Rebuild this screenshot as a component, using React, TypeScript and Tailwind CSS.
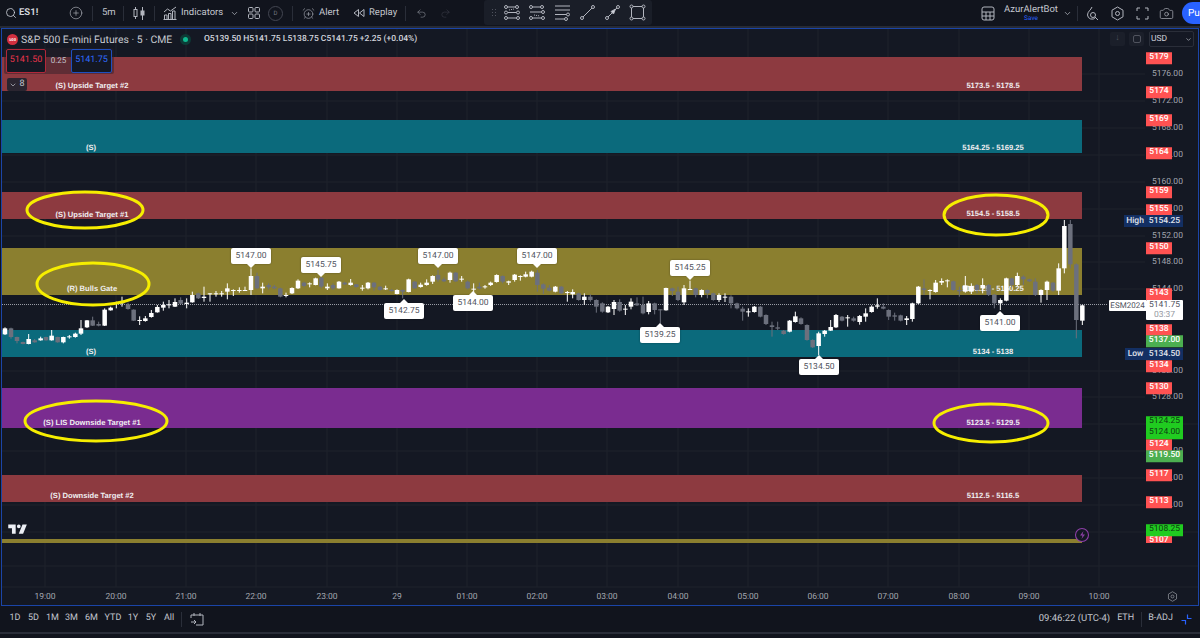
import { AlarmClockPlus, Camera, ChevronDown, CirclePlus, Redo2, Search, Undo2 } from 'lucide-react';

// -----------------------------------------------------------------------------
// Chart data. Everything here is measured in page pixels, the canvas is shifted
// by the frame offset below (frame padding box starts at 2,29).
// -----------------------------------------------------------------------------

const FX = 2;
const FY = 29;

const zones = [
  { y: 57, h: 34, fill: '#8d3a40' },
  { y: 120, h: 33, fill: '#0b6a7c' },
  { y: 192, h: 27, fill: '#8d3a40' },
  { y: 248, h: 47, fill: '#8b7f2f' },
  { y: 330, h: 27, fill: '#0b6a7c' },
  { y: 388, h: 40, fill: '#7a2c90' },
  { y: 475, h: 27, fill: '#8d3a40' },
  { y: 539, h: 4, fill: '#8b7f2f' },
];

const zoneLabels = [
  { x: 92, y: 86, t: '(S) Upside Target #2' },
  { x: 993, y: 86, t: '5173.5 - 5178.5' },
  { x: 91, y: 148, t: '(S)' },
  { x: 993, y: 148, t: '5164.25 - 5169.25' },
  { x: 92, y: 215, t: '(S) Upside Target #1' },
  { x: 993, y: 214, t: '5154.5 - 5158.5' },
  { x: 92, y: 289, t: '(R) Bulls Gate' },
  { x: 993, y: 289, t: '5143.25 - 5150.25' },
  { x: 91, y: 352, t: '(S)' },
  { x: 993, y: 352, t: '5134 - 5138' },
  { x: 92, y: 423, t: '(S) LIS Downside Target #1' },
  { x: 993, y: 423, t: '5123.5 - 5129.5' },
  { x: 92, y: 496, t: '(S) Downside Target #2' },
  { x: 993, y: 496, t: '5112.5 - 5116.5' },
];

// [x, bodyTop, bodyBottom, wickTop, wickBottom, white] read at 3x from the crops
type C = [number, number, number, number, number, number];

const seg1: C[] = [
  [15, 265, 283, 262, 285, 1], [33, 265, 291, 263, 296, 0], [51, 291, 303, 290, 310, 0], [69, 306, 312, 305, 313, 0],
  [86, 297, 312, 282, 313, 1], [104, 301, 307, 297, 308, 0], [122, 295, 301, 290, 302, 1], [138, 291, 301, 290, 302, 0],
  [155, 287, 301, 270, 302, 1], [173, 291, 307, 290, 308, 0], [190, 291, 307, 290, 310, 1], [208, 289, 292, 285, 296, 1],
  [226, 281, 291, 278, 293, 1], [243, 265, 281, 240, 285, 1], [261, 241, 262, 240, 264, 1], [278, 241, 257, 230, 258, 0],
  [296, 252, 257, 245, 259, 0], [314, 209, 257, 205, 258, 1], [332, 203, 211, 200, 212, 1], [349, 188, 192, 185, 205, 1],
  [366, 186, 190, 170, 200, 1], [384, 193, 207, 188, 209, 0], [401, 209, 242, 208, 243, 0], [419, 240, 243, 229, 255, 1],
  [436, 235, 243, 228, 245, 1], [454, 219, 231, 210, 233, 1], [472, 201, 217, 195, 218, 1], [490, 195, 203, 185, 212, 1],
  [507, 193, 196, 180, 205, 1], [525, 186, 200, 175, 201, 1], [542, 180, 191, 172, 192, 0], [560, 188, 192, 175, 205, 1],
  [577, 165, 187, 155, 188, 1], [595, 160, 175, 158, 177, 0], [612, 170, 174, 140, 185, 1], [630, 160, 163, 160, 185, 1],
  [648, 160, 162, 153, 170, 1], [665, 160, 162, 153, 170, 1], [682, 145, 155, 130, 178, 1], [700, 150, 152, 148, 168, 1],
  [718, 150, 152, 142, 158, 1], [735, 150, 152, 140, 153, 1], [753, 108, 150, 85, 165, 1], [771, 108, 145, 98, 148, 0],
  [788, 140, 145, 128, 160, 1], [806, 135, 142, 130, 148, 0], [823, 140, 145, 135, 148, 0], [841, 145, 170, 143, 172, 0],
  [858, 165, 167, 158, 172, 1], [876, 144, 160, 142, 162, 1], [894, 122, 145, 118, 147, 1], [912, 128, 138, 125, 142, 0],
  [929, 130, 133, 127, 142, 1], [947, 115, 135, 113, 136, 1], [964, 113, 140, 111, 145, 0], [982, 140, 145, 130, 150, 1],
  [999, 135, 145, 130, 150, 0], [1017, 125, 145, 123, 146, 1], [1034, 128, 133, 125, 135, 0], [1052, 128, 135, 117, 137, 1],
  [1069, 133, 141, 132, 143, 0], [1087, 143, 146, 135, 152, 1], [1104, 128, 145, 126, 148, 1], [1122, 128, 142, 126, 152, 0],
  [1140, 140, 150, 138, 152, 0], [1157, 145, 147, 137, 150, 1], [1175, 150, 152, 147, 155, 0], [1191, 150, 162, 148, 163, 1],
];

const seg2: C[] = [
  [8, 150, 155, 148, 175, 0], [26, 118, 156, 116, 157, 1], [44, 125, 145, 123, 146, 0], [62, 134, 141, 128, 143, 1],
  [80, 128, 135, 118, 137, 1], [98, 108, 125, 106, 132, 1], [114, 105, 119, 90, 125, 0], [132, 118, 124, 112, 126, 0],
  [150, 98, 120, 95, 128, 1], [167, 98, 124, 96, 126, 0], [185, 116, 119, 108, 125, 1], [203, 125, 145, 122, 148, 0],
  [221, 146, 148, 130, 165, 1], [238, 140, 145, 128, 148, 0], [255, 139, 142, 135, 146, 1], [272, 128, 135, 125, 138, 1],
  [290, 105, 126, 103, 128, 1], [308, 108, 125, 106, 130, 0], [326, 124, 128, 122, 135, 1], [344, 104, 120, 102, 125, 1],
  [361, 108, 110, 106, 122, 1], [377, 103, 110, 95, 112, 1], [395, 95, 110, 92, 112, 1], [412, 98, 135, 90, 155, 0],
  [430, 133, 146, 130, 162, 0], [448, 143, 152, 135, 154, 0], [466, 140, 155, 138, 157, 1], [484, 140, 160, 138, 162, 0],
  [502, 156, 158, 153, 185, 1], [518, 156, 163, 148, 175, 1], [536, 160, 180, 158, 182, 0], [553, 170, 180, 160, 195, 1],
  [571, 170, 180, 163, 185, 0], [589, 180, 200, 178, 218, 0], [607, 190, 215, 187, 218, 0], [624, 200, 217, 198, 219, 1],
  [642, 186, 207, 180, 225, 1], [659, 186, 212, 178, 215, 0], [676, 206, 209, 195, 225, 1], [693, 185, 200, 175, 208, 1],
  [711, 190, 196, 172, 198, 0], [729, 195, 220, 170, 223, 0], [746, 190, 216, 183, 223, 1], [764, 190, 210, 188, 223, 0],
  [781, 208, 210, 208, 250, 0], [798, 144, 211, 143, 212, 1], [817, 145, 153, 143, 168, 0], [834, 155, 180, 140, 183, 0],
  [852, 145, 187, 135, 195, 1], [870, 147, 149, 122, 150, 1], [887, 145, 165, 143, 172, 0], [905, 150, 165, 148, 172, 1],
  [922, 150, 160, 148, 175, 0], [940, 160, 180, 158, 182, 0], [957, 165, 180, 160, 186, 1], [975, 170, 172, 160, 186, 1],
  [993, 170, 190, 166, 205, 0], [1011, 190, 205, 188, 208, 0], [1028, 206, 215, 200, 242, 0], [1045, 214, 216, 205, 230, 1],
  [1063, 200, 216, 198, 218, 1], [1081, 200, 230, 198, 232, 0], [1098, 225, 252, 223, 255, 0], [1116, 256, 261, 245, 290, 0],
  [1133, 262, 266, 245, 270, 0], [1151, 272, 282, 270, 284, 0], [1169, 242, 275, 240, 277, 1], [1186, 229, 246, 215, 248, 1],
];

const seg3: C[] = [
  [123, 325, 342, 322, 344, 0], [141, 345, 390, 343, 392, 0], [158, 390, 412, 388, 414, 0], [176, 370, 408, 365, 435, 1],
  [194, 362, 372, 360, 380, 1], [212, 351, 362, 330, 363, 1], [228, 315, 352, 312, 354, 1], [246, 320, 332, 318, 334, 0],
  [263, 322, 324, 315, 350, 1], [281, 325, 332, 320, 335, 0], [299, 318, 336, 315, 344, 1], [317, 310, 320, 295, 335, 1],
  [335, 290, 306, 286, 308, 1], [352, 286, 290, 265, 296, 1], [370, 290, 296, 280, 298, 0], [386, 300, 320, 298, 330, 0],
  [404, 316, 320, 308, 332, 0], [422, 316, 332, 314, 334, 0], [440, 325, 330, 318, 345, 1], [457, 280, 327, 278, 335, 1],
  [475, 230, 280, 228, 282, 1], [492, 235, 240, 208, 255, 0], [510, 240, 242, 238, 268, 1], [527, 218, 246, 210, 248, 1],
  [545, 213, 218, 205, 225, 1], [562, 211, 214, 208, 232, 1], [580, 214, 240, 212, 242, 0], [598, 240, 244, 230, 260, 0],
  [616, 226, 245, 198, 248, 1], [634, 228, 245, 220, 252, 1], [651, 225, 240, 222, 250, 0], [668, 225, 235, 205, 250, 1],
  [686, 225, 255, 222, 258, 0], [703, 254, 280, 252, 295, 0], [721, 270, 280, 265, 300, 1], [739, 205, 272, 203, 274, 1],
  [755, 205, 225, 203, 232, 0], [772, 198, 225, 188, 228, 1], [790, 200, 208, 196, 225, 0], [808, 208, 214, 206, 216, 0],
  [826, 215, 255, 205, 258, 0], [843, 240, 255, 238, 278, 1], [861, 215, 240, 212, 270, 1], [879, 218, 242, 216, 245, 0],
  [896, 175, 242, 160, 255, 1], [913, 48, 175, 30, 190, 1], [931, 42, 163, 30, 175, 0], [949, 163, 330, 160, 385, 0],
  [967, 286, 332, 284, 345, 1],
];

const candles = [
  ...seg1.map((c) => ({ c, ox: 0, oy: 240 })),
  ...seg2.map((c) => ({ c, ox: 400, oy: 240 })),
  ...seg3.map((c) => ({ c, ox: 760, oy: 210 })),
];

const callouts = [
  { cx: 251, top: 248, t: '5147.00', up: false },
  { cx: 321, top: 257, t: '5145.75', up: false },
  { cx: 404, top: 303, t: '5142.75', up: true },
  { cx: 438, top: 248, t: '5147.00', up: false },
  { cx: 473, top: 295, t: '5144.00', up: true },
  { cx: 537, top: 248, t: '5147.00', up: false },
  { cx: 690, top: 260, t: '5145.25', up: false },
  { cx: 660, top: 327, t: '5139.25', up: true },
  { cx: 819, top: 359, t: '5134.50', up: true },
  { cx: 1000, top: 315, t: '5141.00', up: true },
];

const ellipses = [
  { cx: 85, cy: 210, rx: 58, ry: 18 },
  { cx: 93, cy: 284, rx: 56, ry: 21 },
  { cx: 996, cy: 215, rx: 52, ry: 20 },
  { cx: 96, cy: 421, rx: 71, ry: 20 },
  { cx: 991, cy: 423, rx: 57, ry: 19 },
];

const hours = [45, 116, 186, 256, 327, 397, 467, 537, 607, 678, 748, 818, 888, 959, 1029, 1099];
const hourLabels = ['19:00', '20:00', '21:00', '22:00', '23:00', '29', '01:00', '02:00', '03:00', '04:00', '05:00', '06:00', '07:00', '08:00', '09:00', '10:00'];

const ticks = [
  { y: 74, t: '5176.00' }, { y: 101, t: '5172.00' }, { y: 128, t: '5168.00' }, { y: 155, t: '5164.00' },
  { y: 182, t: '5160.00' }, { y: 209, t: '5156.00' }, { y: 236, t: '5152.00' }, { y: 262, t: '5148.00' },
  { y: 289, t: '5144.00' }, { y: 371, t: '5132.00' }, { y: 397, t: '5128.00' }, { y: 451, t: '5120.00' },
  { y: 478, t: '5116.00' }, { y: 505, t: '5112.00' },
];

const redTags = [
  { y: 58, t: '5179' }, { y: 92, t: '5174' }, { y: 120, t: '5169' }, { y: 153, t: '5164' }, { y: 192, t: '5159' },
  { y: 210, t: '5155' }, { y: 248, t: '5150' }, { y: 294, t: '5143' }, { y: 330, t: '5138' }, { y: 366, t: '5134' },
  { y: 388, t: '5130' }, { y: 445, t: '5124' }, { y: 475, t: '5117' }, { y: 502, t: '5113' },
];

const greenTags = [
  { y: 341, t: '5137.00', bright: false },
  { y: 422, t: '5124.25', bright: true },
  { y: 433, t: '5124.00', bright: true },
  { y: 456, t: '5119.50', bright: false },
  { y: 530, t: '5108.25', bright: true },
];

// -----------------------------------------------------------------------------
// Toolbar helpers
// -----------------------------------------------------------------------------

function Sep({ className }: { className?: string }) {
  return <div className={`h-[15px] w-px shrink-0 bg-[#2a2e39] ${className ?? ''}`} />;
}

// Small line drawing tool glyphs for the floating favourites bar
function ToolIcon({ kind }: { kind: number }) {
  const dot = (cx: number, cy: number) => <circle key={`${cx}-${cy}`} cx={cx} cy={cy} r="1.5" fill="#1a1e28" />;
  return (
    <svg width="17" height="17" viewBox="0 0 17 17" fill="none" stroke="#b2b5be" strokeWidth="1" className="shrink-0">
      {kind === 0 && (
        <>
          <path d="M1 3h11M4 8.5h11M1 14h14" />
          <path d="M5 6l5-1" strokeDasharray="1 1" />
          {[dot(2, 3), dot(13, 3), dot(2, 8.5), dot(14, 8.5), dot(2, 14), dot(14, 14)]}
        </>
      )}
      {kind === 1 && (
        <>
          <path d="M1 3h12M1 8h14M1 14h14" />
          <path d="M5 11l6 1" strokeDasharray="1 1" />
          {[dot(2, 3), dot(13, 3), dot(14, 8), dot(2, 14), dot(14, 14)]}
        </>
      )}
      {kind === 2 && (
        <>
          <path d="M1 2h15M1 6h15M1 10.5h12M1 15h11" />
          {[dot(14, 10.5), dot(12, 15)]}
        </>
      )}
      {kind === 3 && (
        <>
          <path d="M3 14L14 3" />
          {[dot(3, 14), dot(14, 3)]}
        </>
      )}
      {kind === 4 && (
        <>
          <path d="M3 14L14 3" />
          <path d="M7 7.5l2.5 2.5 2-5z" fill="#d1d4dc" />
          {[dot(3, 14), dot(14, 3)]}
        </>
      )}
      {kind === 5 && (
        <>
          <rect x="2.5" y="2.5" width="12" height="12" />
          {[dot(2.5, 2.5), dot(14.5, 2.5), dot(2.5, 14.5), dot(14.5, 14.5)]}
        </>
      )}
    </svg>
  );
}

function TopBar() {
  return (
    <div className="flex h-[26px] shrink-0 items-center bg-[#11141d] text-[9.5px] text-[#c4c7cf] [&>svg]:shrink-0">
      <Search size={12} strokeWidth={1.6} className="ml-[5px] text-[#d1d4dc]" />
      <span className="ml-[2px] w-[50px] shrink-0 text-[9.5px] font-bold text-[#d1d4dc]">ES1!</span>
      <CirclePlus size={14} strokeWidth={1.1} className="text-[#b2b5be]" />
      <Sep className="ml-[9px]" />
      <span className="ml-[9px] w-[13px] shrink-0 text-[9.5px]">5m</span>
      <Sep className="ml-[8px]" />
      <svg width="12" height="14" viewBox="0 0 12 14" fill="none" stroke="#b2b5be" className="ml-[9px]">
        <rect x="1" y="3.5" width="3" height="7" />
        <path d="M2.5 1v2.5M2.5 10.5V13" />
        <rect x="8" y="5" width="3" height="4" fill="#b2b5be" />
        <path d="M9.5 1v13" />
      </svg>
      <Sep className="ml-[9px]" />
      <svg width="14" height="14" viewBox="0 0 14 14" fill="none" stroke="#b2b5be" className="ml-[8px]">
        <path d="M1 6l3.5-3 3 2L13 1" />
        <path d="M1.5 13V9H4v4M5.5 13V7.5H8V13M9.5 13V5H12v8M0.5 13.5h13" />
      </svg>
      <span className="ml-[4px] w-[41px] shrink-0">Indicators</span>
      <ChevronDown size={9} className="ml-[8px] text-[#b2b5be]" />
      <svg width="12" height="12" viewBox="0 0 12 12" fill="none" stroke="#b2b5be" className="ml-[9px]">
        <rect x="0.5" y="0.5" width="4.5" height="4.5" rx="1" />
        <rect x="7" y="0.5" width="4.5" height="4.5" rx="1" />
        <rect x="0.5" y="7" width="4.5" height="4.5" rx="1" />
        <rect x="7" y="7" width="4.5" height="4.5" rx="1" />
      </svg>
      <span className="ml-[8px] flex h-[15px] w-[15px] shrink-0 items-center justify-center rounded-full border border-[#434651] text-[6px] text-[#787b86]">D</span>
      <Sep className="ml-[9px]" />
      <AlarmClockPlus size={13} strokeWidth={1.1} className="ml-[9px] text-[#b2b5be]" />
      <span className="ml-[4px] w-[20px] shrink-0">Alert</span>
      <svg width="12" height="10" viewBox="0 0 12 10" fill="none" stroke="#b2b5be" className="ml-[14px]">
        <path d="M5.5 1.5v7L1 5zM11 1.5v7L6.5 5z" strokeLinejoin="round" />
      </svg>
      <span className="ml-[4px] w-[28px] shrink-0">Replay</span>
      <Sep className="ml-[8px]" />
      <Undo2 size={11} strokeWidth={1.2} className="ml-[10px] text-[#9598a1]" />
      <Redo2 size={11} strokeWidth={1.2} className="ml-[13px] text-[#3c3f4a]" />

      <div className="ml-[33px] flex h-[25px] w-[168px] shrink-0 items-center gap-[8px] self-start rounded-[3px] bg-[#1a1e28] pl-[8px]">
        <div className="grid grid-cols-2 gap-[2px]">
          {[0, 1, 2, 3, 4, 5].map((i) => (
            <span key={i} className="h-px w-px bg-[#50535e]" />
          ))}
        </div>
        {[0, 1, 2, 3, 4, 5].map((k) => (
          <ToolIcon key={k} kind={k} />
        ))}
      </div>

      <svg width="14" height="15" viewBox="0 0 14 15" fill="none" stroke="#b2b5be" className="ml-auto">
        <rect x="1" y="1" width="12" height="13" rx="2" />
        <path d="M1 6h12M5 6v8M9 6v8M1 10h12" />
      </svg>
      <div className="ml-[9px] flex w-[54px] shrink-0 flex-col items-center leading-none">
        <span className="text-[9.5px] text-[#c4c7cf]">AzurAlertBot</span>
        <span className="mt-[1px] text-[6.5px] text-[#2962ff]">Save</span>
      </div>
      <ChevronDown size={9} className="ml-[5px] text-[#b2b5be]" />
      <Sep className="ml-[5px]" />
      <svg width="14" height="15" viewBox="0 0 14 15" fill="none" stroke="#b2b5be" className="ml-[7px]">
        <path d="M7 1C6 4 2.5 5.5 2.5 9a4.5 4.5 0 0 0 8 2.5" />
        <circle cx="8" cy="9" r="2.5" />
        <path d="M10 11l3 3" />
      </svg>
      <svg width="15" height="15" viewBox="0 0 15 15" fill="none" stroke="#b2b5be" className="ml-[11px]">
        <path d="M7.5 1L13 4.2v6.6L7.5 14 2 10.8V4.2z" />
        <circle cx="7.5" cy="7.5" r="2" />
      </svg>
      <svg width="13" height="13" viewBox="0 0 13 13" fill="none" stroke="#b2b5be" className="ml-[11px]">
        <path d="M1 4V1h3M9 1h3v3M12 9v3H9M4 12H1V9" />
      </svg>
      <Camera size={15} strokeWidth={1.1} className="ml-[10px] text-[#b2b5be]" />
      <div className="ml-[8px] flex h-[22px] w-[18px] shrink-0 items-center rounded-l-full bg-[#2962ff] pl-[6px] text-[10px] text-white">Pu</div>
    </div>
  );
}

function BottomBar() {
  const ranges = [
    { t: '1D', w: 'w-[18px]' },
    { t: '5D', w: 'w-[19px]' },
    { t: '1M', w: 'w-[19px]' },
    { t: '3M', w: 'w-[19px]' },
    { t: '6M', w: 'w-[21px]' },
    { t: 'YTD', w: 'w-[22px]' },
    { t: '1Y', w: 'w-[18px]' },
    { t: '5Y', w: 'w-[18px]' },
    { t: 'All', w: 'w-[18px]' },
  ];
  return (
    <div className="flex h-[26px] shrink-0 items-center bg-[#11141d] text-[9px] text-[#c4c7cf]">
      <div className="ml-[6px] flex items-center">
        {ranges.map((r) => (
          <span key={r.t} className={`${r.w} text-center`}>
            {r.t}
          </span>
        ))}
      </div>
      <Sep className="ml-[3px]" />
      <svg width="14" height="14" viewBox="0 0 14 14" fill="none" stroke="#b2b5be" className="ml-[8px]">
        <path d="M1 6V3h12v10H6M4 1v3M10 1v3M1 10h5M4 8l2 2-2 2" />
      </svg>
      <span className="ml-auto text-[9.5px]">09:46:22 (UTC-4)</span>
      <span className="ml-[7px]">ETH</span>
      <Sep className="ml-[7px]" />
      <span className="ml-[6px]">B-ADJ</span>
      <svg width="11" height="11" viewBox="0 0 11 11" fill="none" stroke="#2962ff" strokeWidth="1.2" className="ml-[8px] mr-[8px]">
        <path d="M6.5 0.5v4h4M0.5 6.5h4v4" />
      </svg>
    </div>
  );
}

// -----------------------------------------------------------------------------
// Chart canvas
// -----------------------------------------------------------------------------

function Callout({ cx, top, t, up }: { cx: number; top: number; t: string; up: boolean }) {
  return (
    <div
      className="absolute flex h-[16px] w-[40px] items-center justify-center rounded-[2px] bg-white text-[8.5px] text-[#50535e] shadow-[0_0_2px_rgba(0,0,0,0.4)]"
      style={{ left: cx - 20 - FX, top: top - FY }}
    >
      {t}
      <span
        className={
          up
            ? 'absolute -top-[4px] left-1/2 -ml-[4px] h-0 w-0 border-x-[4px] border-b-[4px] border-x-transparent border-b-white'
            : 'absolute -bottom-[4px] left-1/2 -ml-[4px] h-0 w-0 border-x-[4px] border-t-[4px] border-x-transparent border-t-white'
        }
      />
    </div>
  );
}

function Chart() {
  return (
    <div className="relative mx-px h-[578px] shrink-0 overflow-hidden border border-[#1b45a8] bg-[#141823]">
      {/* grid + zones */}
      <svg width="1196" height="577" viewBox={`${FX} ${FY} 1196 577`} className="absolute left-0 top-0">
        {hours.map((x) => (
          <line key={x} x1={x} x2={x} y1="29" y2="587" stroke="#1e222d" />
        ))}
        {ticks.map((t) => (
          <line key={t.y} x1="2" x2="1145" y1={t.y} y2={t.y} stroke="#1e222d" />
        ))}
        {[424, 532, 566, 587].map((y) => (
          <line key={y} x1="2" x2="1198" y1={y} y2={y} stroke="#1e222d" />
        ))}
        {zones.map((z) => (
          <rect key={z.y} x="2" y={z.y} width="1080" height={z.h} fill={z.fill} />
        ))}
      </svg>

      {zoneLabels.map((l) => (
        <span
          key={l.t}
          className="absolute -translate-x-1/2 -translate-y-1/2 whitespace-nowrap font-['Liberation_Sans',sans-serif] text-[7.6px] font-bold text-[#f0eef0]"
          style={{ left: l.x - FX, top: l.y - FY }}
        >
          {l.t}
        </span>
      ))}

      {/* candles + hand drawn ellipses */}
      <svg width="1196" height="577" viewBox={`${FX} ${FY} 1196 577`} className="absolute left-0 top-0">
        <line x1="2" x2="1108" y1="304.5" y2="304.5" stroke="#9a9da6" strokeDasharray="1 1" />
        {candles.map(({ c, ox, oy }) => {
          const x = ox + c[0] / 3;
          const color = c[5] ? '#ffffff' : '#6c707d';
          return (
            <g key={`${ox}-${c[0]}`} fill={color}>
              <rect x={x - 0.5} y={oy + c[3] / 3} width="1" height={(c[4] - c[3]) / 3} />
              <rect x={x - 2.25} y={oy + c[1] / 3} width="4.5" height={Math.max((c[2] - c[1]) / 3, 1)} />
            </g>
          );
        })}
        {ellipses.map((e) => (
          <ellipse key={`${e.cx}-${e.cy}`} cx={e.cx} cy={e.cy} rx={e.rx} ry={e.ry} fill="none" stroke="#f6ee00" strokeWidth="3" />
        ))}
        {/* TradingView logo */}
        <g transform="translate(7 522) scale(0.62)" fill="#eceff5">
          <path d="M14 4H2v6h6v9h6V4Zm12 15h-7l6-15h7l-6 15Zm-7-9a3 3 0 1 0 0-6 3 3 0 0 0 0 6Z" />
        </g>
        {/* lightning event marker */}
        <circle cx="1082" cy="535" r="6.5" fill="#141823" stroke="#8e3fa8" strokeWidth="1.1" />
        <path d="M1083.5 531l-3.5 4.5h2.5l-1 3.5 3.5-4.5h-2.5z" fill="#8e3fa8" />
      </svg>

      {callouts.map((c) => (
        <Callout key={`${c.cx}`} {...c} />
      ))}

      {/* price scale */}
      {ticks.map((t) => (
        <span
          key={t.y}
          className="absolute -translate-y-1/2 text-[8.5px] text-[#a3a6af]"
          style={{ left: 1152 - FX, top: t.y - FY }}
        >
          {t.t}
        </span>
      ))}
      {/* 5107 runs off the bottom of the visible pane */}
      <span className="absolute left-[1144px] top-[507px] flex h-[7px] w-[26px] justify-center overflow-hidden bg-[#ff5252] text-[8.5px] font-medium leading-[8px] text-white">5107</span>
      {redTags.map((t) => (
        <span
          key={t.y}
          className="absolute flex h-[11.5px] w-[26px] -translate-y-1/2 items-center justify-center bg-[#ff5252] text-[8.5px] font-medium text-white"
          style={{ left: 1146 - FX, top: t.y - FY }}
        >
          {t.t}
        </span>
      ))}
      {greenTags.map((t) => (
        <span
          key={t.y}
          className={`absolute flex h-[11.5px] w-[37px] -translate-y-1/2 items-center justify-center text-[8.5px] ${t.bright ? 'bg-[#20cc20] text-[#0e3d12]' : 'bg-[#4caf50] font-medium text-white'}`}
          style={{ left: 1146 - FX, top: t.y - FY }}
        >
          {t.t}
        </span>
      ))}
      {/* high / low */}
      <div className="absolute left-[1122px] top-[186px] flex h-[12px] w-[59px] items-center bg-[#132f63] text-[8.5px] font-medium text-[#e0e3eb]">
        <span className="w-[22px] text-center">High</span>
        <span className="flex-1 text-center">5154.25</span>
      </div>
      <div className="absolute left-[1123px] top-[319px] flex h-[12px] w-[58px] items-center bg-[#132f63] text-[8.5px] font-medium text-[#e0e3eb]">
        <span className="w-[21px] text-center">Low</span>
        <span className="flex-1 text-center">5134.50</span>
      </div>
      {/* last price */}
      <div className="absolute left-[1107px] top-[271px] flex h-[11px] w-[37px] items-center justify-center rounded-l-[1px] bg-white text-[8px] text-[#50535e]">ESM2024</div>
      <div className="absolute left-[1144px] top-[271px] flex h-[20px] w-[37px] flex-col items-center justify-center rounded-[1px] bg-white text-[8.5px] leading-[10px] text-[#50535e]">
        <span>5141.75</span>
        <span className="text-[#9598a1]">03:37</span>
      </div>

      {/* legend */}
      <div className="absolute left-[5px] top-[3px] flex items-center">
        <span className="flex h-[11px] w-[11px] items-center justify-center rounded-full bg-[#d32f3f] text-[4px] font-bold text-white">500</span>
        <span className="ml-[3px] w-[153px] whitespace-nowrap text-[10.4px] text-[#c8cbd2]">S&amp;P 500 E-mini Futures · 5 · CME</span>
        <span className="ml-[6px] flex h-[11px] w-[11px] items-center justify-center rounded-full bg-[#0d3a36]">
          <span className="h-[5px] w-[5px] rounded-full bg-[#0fb88f]" />
        </span>
        <span className="ml-[13px] whitespace-nowrap text-[8.5px] font-medium text-[#d1d4dc]">
          O5139.50&nbsp;H5141.75&nbsp;L5138.75&nbsp;C5141.75&nbsp;+2.25 (+0.04%)
        </span>
      </div>

      {/* buy / sell */}
      <div className="absolute left-[2px] top-[19px] flex h-[26px] w-[110px] items-center rounded-[2px] bg-[rgba(40,30,40,0.45)] pl-[2px] text-[9px]">
        <span className="flex h-[24px] w-[40px] items-center justify-center rounded-[2px] border border-[#b2283a] bg-[#141823] text-[#e8344a]">5141.50</span>
        <span className="w-[25px] text-center text-[8px] text-[#c4c7cf]">0.25</span>
        <span className="flex h-[24px] w-[41px] items-center justify-center rounded-[2px] border border-[#1f4fc0] bg-[#141823] text-[#2f6bff]">5141.75</span>
      </div>
      <div className="absolute left-[5px] top-[49px] flex h-[13px] w-[20px] items-center justify-center gap-[2px] rounded-[2px] bg-[#2a2530] text-[9px] text-[#c4c7cf]">
        <ChevronDown size={8} /> 8
      </div>

      {/* scale corner controls */}
      <div className="absolute left-[1108px] top-[3px] flex h-[14px] w-[15px] items-center justify-center rounded-[2px] bg-[#1b1f2a] text-[9px] text-[#50535e]">↓</div>
      <div className="absolute left-[1127px] top-[3px] flex h-[14px] w-[15px] items-center justify-center rounded-[2px] bg-[#1b1f2a]">
        <span className="h-[8px] w-[8px] rounded-[2px] border border-[#50535e]" />
      </div>
      <div className="absolute left-[1147px] top-[2px] flex h-[16px] w-[45px] items-center justify-between rounded-[2px] border border-[#2a2e39] bg-[#141823] px-[1px] text-[8.5px] text-[#d1d4dc]">
        USD
        <ChevronDown size={7} />
      </div>

      {/* time scale */}
      {hours.map((x, i) => (
        <span
          key={x}
          className="absolute -translate-x-1/2 -translate-y-1/2 text-[8.5px] text-[#a3a6af]"
          style={{ left: x - FX, top: 597 - FY }}
        >
          {hourLabels[i]}
        </span>
      ))}
      <svg width="11" height="11" viewBox="0 0 15 15" fill="none" stroke="#9598a1" className="absolute left-[1165px] top-[562px]">
        <path d="M7.5 1L13 4.2v6.6L7.5 14 2 10.8V4.2z" />
        <circle cx="7.5" cy="7.5" r="2" />
      </svg>
    </div>
  );
}

export default function App() {
  return (
    <div className="flex h-[638px] w-[1200px] flex-col overflow-hidden bg-[#11141d] font-['Roboto','Liberation_Sans',sans-serif] [text-rendering:geometricPrecision]">
      <TopBar />
      <div className="h-[2px] shrink-0 bg-[#262a35]" />
      <Chart />
      <BottomBar />
      <div className="h-[2px] shrink-0 bg-[#2a2e39]" />
      <div className="flex-1 bg-[#11141d]" />
    </div>
  );
}
